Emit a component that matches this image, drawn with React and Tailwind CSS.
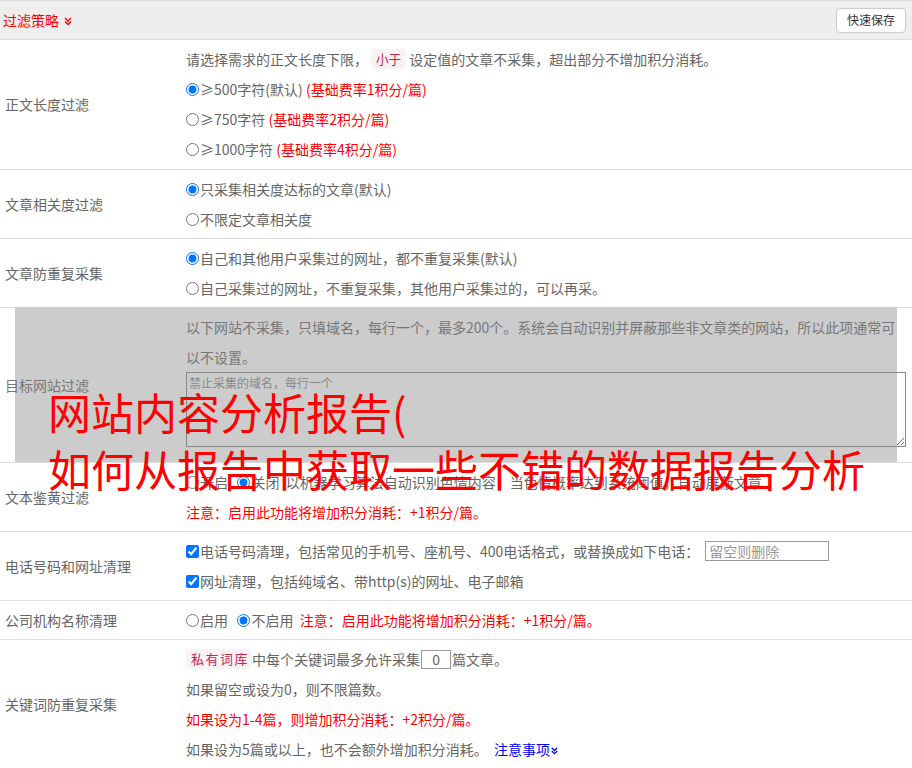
import React from "react";

function Chevrons({ className }) {
  return (
    <svg viewBox="0 0 10 10" className={className} fill="none" stroke="currentColor" strokeWidth="1.4">
      <path d="M2 2 L5 5 L8 2" />
      <path d="M2 5.5 L5 8.5 L8 5.5" />
    </svg>
  );
}

function Row({ label, children, labelClass = "text-[#666]", extra, bodyClass = "py-[4px]" }) {
  return (
    <div className="relative flex border-t border-[#ddd]">
      {extra}
      <div className={"relative z-10 w-[186px] shrink-0 pl-[5px] flex items-center " + labelClass}>{label}</div>
      <div className={"relative z-10 flex-1 min-w-0 pr-[6px] " + bodyClass}>{children}</div>
    </div>
  );
}

function Line({ children, className = "" }) {
  return <div className={"h-[30px] flex items-center whitespace-nowrap " + className}>{children}</div>;
}

function Radio({ name, checked }) {
  return (
    <input
      type="radio"
      name={name}
      defaultChecked={checked}
      className="m-0 mr-[1px] w-[13px] h-[13px] shrink-0"
    />
  );
}

function Check() {
  return <input type="checkbox" defaultChecked className="m-0 mr-[1px] w-[13px] h-[13px] shrink-0" />;
}

function Pill({ children, className = "" }) {
  return (
    <span className={"bg-[#f9f2f4] text-[#c7254e] rounded-[4px] leading-[20px] " + className}>{children}</span>
  );
}

export default function App() {
  return (
    <div className="relative w-[912px] h-[768px] overflow-hidden bg-white font-['Noto_Sans_CJK_SC','Microsoft_YaHei',sans-serif] text-[14px] text-[#666]">
      {/* header */}
      <div className="h-[39px] bg-[#eee] border-t border-[#ddd] flex items-center justify-between pl-[3px] pr-[6px]">
        <div className="flex items-center text-[#f00]">
          <span>过滤策略</span>
          <Chevrons className="w-[10px] h-[10px] ml-[4px] mt-[1px]" />
        </div>
        <button className="h-[25px] w-[70px] bg-white border border-[#ccc] rounded-[4px] text-[12px] text-[#333] flex items-center justify-center">
          快速保存
        </button>
      </div>

      <Row label="正文长度过滤" bodyClass="pt-[4px] pb-[5px]">
        <Line>
          请选择需求的正文长度下限，
          <Pill className="text-[12.6px] px-[5px] mx-[3px]">小于</Pill>
          设定值的文章不采集，超出部分不增加积分消耗。
        </Line>
        <Line>
          <Radio name="len" checked />≥500字符(默认)&nbsp;<span className="text-[#f00]">(基础费率1积分/篇)</span>
        </Line>
        <Line>
          <Radio name="len" />≥750字符&nbsp;<span className="text-[#f00]">(基础费率2积分/篇)</span>
        </Line>
        <Line>
          <Radio name="len" />≥1000字符&nbsp;<span className="text-[#f00]">(基础费率4积分/篇)</span>
        </Line>
      </Row>

      <Row label="文章相关度过滤">
        <Line>
          <Radio name="rel" checked />只采集相关度达标的文章(默认)
        </Line>
        <Line>
          <Radio name="rel" />不限定文章相关度
        </Line>
      </Row>

      <Row label="文章防重复采集">
        <Line>
          <Radio name="dup" checked />自己和其他用户采集过的网址，都不重复采集(默认)
        </Line>
        <Line>
          <Radio name="dup" />自己采集过的网址，不重复采集，其他用户采集过的，可以再采。
        </Line>
      </Row>

      <Row
        label="目标网站过滤"
        labelClass="text-[#777]"
        extra={<div className="absolute left-[15px] right-[15px] top-[-1px] bottom-0 bg-[#ccc] z-0" />}
      >
        <p className="leading-[30px] text-[#777]">
          以下网站不采集，只填域名，每行一个，最多200个。系统会自动识别并屏蔽那些非文章类的网站，所以此项通常可以不设置。
        </p>
        <textarea
          placeholder="禁止采集的域名，每行一个"
          className="block w-full h-[75px] mb-[11px] bg-transparent border border-[#888] px-[2px] py-[1px] text-[12px] leading-[18px] placeholder:text-[#888] resize-y"
        />
      </Row>

      <Row label="文本鉴黄过滤">
        <Line>
          <Radio name="porn" />开启&nbsp;&nbsp;&nbsp;
          <Radio name="porn" checked />关闭&nbsp;&nbsp;以机器学习算法自动识别色情内容，当色情概率达到系统阈值，自动屏蔽文章
        </Line>
        <Line className="text-[#f00]">注意：启用此功能将增加积分消耗：+1积分/篇。</Line>
      </Row>

      <Row label="电话号码和网址清理">
        <Line>
          <Check />电话号码清理，包括常见的手机号、座机号、400电话格式，或替换成如下电话：
          <input
            placeholder="留空则删除"
            className="ml-[6px] w-[124px] h-[20px] border border-[#999] px-[3px] text-[14px] placeholder:text-[#999]"
          />
        </Line>
        <Line>
          <Check />网址清理，包括纯域名、带http(s)的网址、电子邮箱
        </Line>
      </Row>

      <Row label="公司机构名称清理">
        <Line>
          <Radio name="corp" />启用&nbsp;&nbsp;&nbsp;
          <Radio name="corp" checked />不启用&nbsp;&nbsp;
          <span className="text-[#f00]">注意：启用此功能将增加积分消耗：+1积分/篇。</span>
        </Line>
      </Row>

      <Row label="关键词防重复采集">
        <Line>
          <Pill className="text-[13px] tracking-[1.5px] pl-[5px] pr-[3px]">私有词库</Pill>
          中每个关键词最多允许采集
          <input
            defaultValue="0"
            className="mx-[1px] w-[30px] h-[19px] border border-[#999] text-center text-[14px] text-[#666]"
          />
          篇文章。
        </Line>
        <Line>如果留空或设为0，则不限篇数。</Line>
        <Line className="text-[#f00]">如果设为1-4篇，则增加积分消耗：+2积分/篇。</Line>
        <Line>
          如果设为5篇或以上，也不会额外增加积分消耗。&nbsp;&nbsp;
          <span className="text-[#00f] flex items-center">
            注意事项
            <Chevrons className="w-[9px] h-[9px] mt-[2px]" />
          </span>
        </Line>
      </Row>

      {/* overlay title */}
      <div className="absolute left-[48px] top-[383px] z-20 text-[#f00] text-[43px] leading-[57px] whitespace-nowrap pointer-events-none">
        <div>网站内容分析报告(</div>
        <div>如何从报告中获取一些不错的数据报告分析</div>
      </div>
    </div>
  );
}
